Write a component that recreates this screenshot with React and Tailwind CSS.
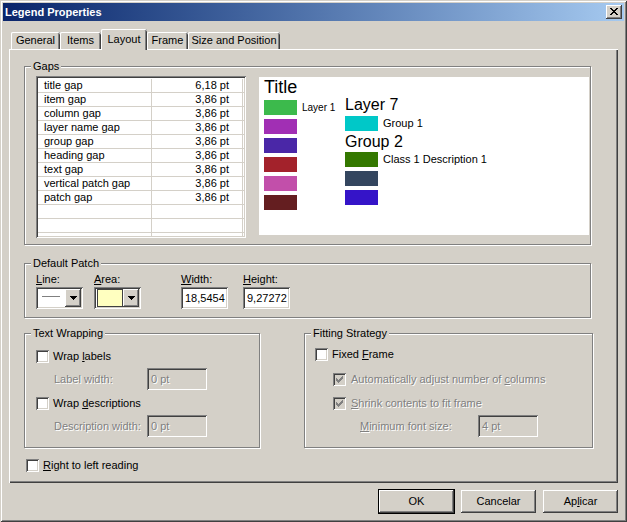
import React from "react";

const SUNKEN =
  "shadow-[inset_1px_1px_0_#808080,inset_-1px_-1px_0_#ffffff,inset_2px_2px_0_#404040,inset_-2px_-2px_0_#d4d0c8]";
const RAISED =
  "shadow-[inset_-1px_-1px_0_#404040,inset_1px_1px_0_#ffffff,inset_-2px_-2px_0_#808080,inset_2px_2px_0_#d4d0c8]";
const ETCHED = "border border-[#808080] shadow-[inset_1px_1px_0_#ffffff,1px_1px_0_#ffffff]";
const DIS = "text-[#808080] [text-shadow:1px_1px_0_#ffffff]";

function Pixels({ rows, color, className = "" }) {
  const h = rows.length;
  const w = rows[0].length;
  const rects = [];
  rows.forEach((r, y) =>
    r.split("").forEach((c, x) => {
      if (c === "X") rects.push(<rect key={x + "-" + y} x={x} y={y} width="1" height="1" fill={color} />);
    })
  );
  return (
    <svg width={w} height={h} viewBox={`0 0 ${w} ${h}`} shapeRendering="crispEdges" className={className}>
      {rects}
    </svg>
  );
}

const CHECK = ["......X", ".....XX", "X...XXX", "XX.XXX.", "XXXXX..", ".XXX...", "..X...."];
const TRI = ["XXXXXXX", ".XXXXX.", "..XXX..", "...X..."];
const CLOSE = ["XX....XX", ".XX..XX.", "..XXXX..", "...XX...", "..XXXX..", ".XX..XX.", "XX....XX"];

function Check({ checked, disabled }) {
  return (
    <span
      className={`w-[13px] h-[13px] shrink-0 flex items-center justify-center ${SUNKEN} ${
        disabled ? "bg-[#d4d0c8]" : "bg-white"
      }`}
    >
      {checked && <Pixels rows={CHECK} color={disabled ? "#808080" : "#000000"} />}
    </span>
  );
}

function U({ children }) {
  return <span className="underline underline-offset-[1px]">{children}</span>;
}

function Group({ title, className = "", children }) {
  return (
    <div className={`${ETCHED} flex flex-col shrink-0 ${className}`}>
      <div className="-mt-[7px] ml-[6px] px-[2px] w-fit bg-[#d4d0c8] leading-[13px]">{title}</div>
      {children}
    </div>
  );
}

function Tab({ label, width, selected }) {
  return (
    <div
      className={`flex justify-center rounded-t-[2px] bg-[#d4d0c8] shadow-[inset_1px_0_0_#ffffff,inset_0_1px_0_#ffffff,inset_-1px_0_0_#404040,inset_-2px_0_0_#808080] ${
        selected ? "relative z-10 h-[21px] -mb-px pt-[4px]" : "h-[17px] pt-[2px]"
      } ${width}`}
    >
      {label}
    </div>
  );
}

function Button({ children, def }) {
  return (
    <div
      className={`w-[75px] h-[23px] flex items-center justify-center bg-[#d4d0c8] ${RAISED} ${
        def ? "outline outline-1 outline-black" : ""
      }`}
    >
      {children}
    </div>
  );
}

function Dropdown({ children }) {
  return (
    <div className={`w-[47px] h-[22px] p-[2px] bg-white ${SUNKEN} flex`}>
      <div className="flex-1 flex items-center">{children}</div>
      <div className={`w-[16px] h-[18px] bg-[#d4d0c8] ${RAISED} flex items-center justify-center`}>
        <Pixels rows={TRI} color="#000000" />
      </div>
    </div>
  );
}

function Field({ value, w = "w-[47px]", disabled }) {
  return (
    <div
      className={`${w} h-[22px] ${SUNKEN} ${disabled ? "bg-[#d4d0c8]" : "bg-white"} flex items-center pl-[4px] pt-[1px]`}
    >
      <span className={disabled ? DIS : ""}>{value}</span>
    </div>
  );
}

const GAPS = [
  ["title gap", "6,18 pt"],
  ["item gap", "3,86 pt"],
  ["column gap", "3,86 pt"],
  ["layer name gap", "3,86 pt"],
  ["group gap", "3,86 pt"],
  ["heading gap", "3,86 pt"],
  ["text gap", "3,86 pt"],
  ["vertical patch gap", "3,86 pt"],
  ["patch gap", "3,86 pt"],
  ["", ""],
  ["", ""],
  ["", ""],
];

function Patch({ color }) {
  return <div className="w-[33px] h-[15px] shrink-0" style={{ backgroundColor: color }} />;
}

export default function App() {
  return (
    <div
      className={`font-['Liberation_Sans',Arial,sans-serif] text-[11px] leading-[13px] text-black w-[627px] h-[522px] bg-[#d4d0c8] p-[3px] flex flex-col shadow-[inset_1px_1px_0_#d4d0c8,inset_-1px_-1px_0_#404040,inset_2px_2px_0_#ffffff,inset_-2px_-2px_0_#808080]`}
    >
      {/* Title bar */}
      <div className="h-[18px] shrink-0 flex items-center justify-between bg-linear-to-r from-[#0a246a] to-[#a6caf0] pl-[2px] pr-[2px]">
        <span className="text-white font-bold text-[11px]">Legend Properties</span>
        <div className={`w-[16px] h-[14px] bg-[#d4d0c8] ${RAISED} flex items-center justify-center pb-[1px]`}>
          <Pixels rows={CLOSE} color="#000000" />
        </div>
      </div>

      <div className="flex flex-col px-[6px] pt-[8px]">
        {/* Tabs */}
        <div className="flex items-end pl-[2px]">
          <Tab label="General" width="w-[49px]" />
          <Tab label="Items" width="w-[41px]" />
          <Tab label="Layout" width="w-[46px]" selected />
          <Tab label="Frame" width="w-[41px]" />
          <Tab label="Size and Position" width="w-[92px]" />
        </div>

        {/* Panel */}
        <div className="h-[434px] flex flex-col pl-[15px] pt-[17px] shadow-[inset_1px_1px_0_#ffffff,inset_-1px_-1px_0_#404040,inset_-2px_-2px_0_#808080]">
          {/* Gaps */}
          <Group title="Gaps" className="w-[567px] h-[179px]">
            <div className="flex items-start mt-[3px] pl-[11px] gap-[13px]">
              <div className={`w-[210px] h-[162px] bg-white p-[2px] ${SUNKEN}`}>
                <div className="h-full overflow-hidden pt-[1px]">
                  {GAPS.map(([n, v], i) => (
                    <div key={i} className="flex h-[14px] border-b border-[#d4d0c8] leading-[13px]">
                      <div className="w-[114px] pl-[6px] border-r border-[#d4d0c8]">{n}</div>
                      <div className="w-[91px] pr-[13px] text-right border-r border-[#d4d0c8]">{v}</div>
                      <div className="flex-1" />
                    </div>
                  ))}
                </div>
              </div>
              <div className="mt-[1px] w-[330px] h-[158px] bg-white pl-[5px] pt-[1px] flex flex-col">
                <div className="text-[18px] leading-[18px]">Title</div>
                <div className="flex items-start">
                  <div className="w-[81px] shrink-0 mt-[4px] flex flex-col gap-[4px]">
                    <div className="flex items-center gap-[5px]">
                      <Patch color="#3cba4c" />
                      <span className="text-[10px] leading-[12px] whitespace-nowrap">Layer 1</span>
                    </div>
                    <Patch color="#a12fb4" />
                    <Patch color="#4a27a7" />
                    <Patch color="#a3222b" />
                    <Patch color="#c24faa" />
                    <Patch color="#641e20" />
                  </div>
                  <div className="flex flex-col">
                    <div className="text-[16px] leading-[18px]">Layer 7</div>
                    <div className="mt-[2px] flex items-center gap-[5px]">
                      <Patch color="#00c8c8" />
                      <span className="text-[11px] leading-[13px]">Group 1</span>
                    </div>
                    <div className="mt-[2px] text-[16px] leading-[18px]">Group 2</div>
                    <div className="mt-[1px] flex items-center gap-[5px]">
                      <Patch color="#347800" />
                      <span className="text-[11px] leading-[13px]">Class 1 Description 1</span>
                    </div>
                    <div className="mt-[4px]">
                      <Patch color="#34465f" />
                    </div>
                    <div className="mt-[4px]">
                      <Patch color="#3514c8" />
                    </div>
                  </div>
                </div>
              </div>
            </div>
          </Group>

          {/* Default Patch */}
          <Group title="Default Patch" className="mt-[18px] w-[567px] h-[55px]">
            <div className="flex mt-[3px] pl-[11px]">
              <div className="flex flex-col gap-[1px]">
                <span>
                  <U>L</U>ine:
                </span>
                <Dropdown>
                  <div className="ml-[4px] w-[18px] h-px bg-[#808080] -mt-[3px]" />
                </Dropdown>
              </div>
              <div className="flex flex-col gap-[1px] ml-[11px]">
                <span>
                  <U>A</U>rea:
                </span>
                <Dropdown>
                  <div className="ml-[1px] w-[26px] h-[18px] border border-[#404040] bg-[#ffffc0]" />
                </Dropdown>
              </div>
              <div className="flex flex-col gap-[1px] ml-[40px]">
                <span>
                  <U>W</U>idth:
                </span>
                <Field value="18,5454" />
              </div>
              <div className="flex flex-col gap-[1px] ml-[15px]">
                <span>
                  <U>H</U>eight:
                </span>
                <Field value="9,27272" />
              </div>
            </div>
          </Group>

          {/* Text wrapping / Fitting */}
          <div className="flex mt-[15px]">
            <Group title="Text Wrapping" className="w-[236px] h-[115px]">
              <div className="flex flex-col pl-[11px]">
                <div className="mt-[10px] flex items-center gap-[4px]">
                  <Check />
                  <span>
                    Wrap <U>l</U>abels
                  </span>
                </div>
                <div className="mt-[5px] h-[22px] flex items-center">
                  <span className={`w-[111px] pl-[18px] ${DIS}`}>Label width:</span>
                  <Field value="0 pt" w="w-[60px]" disabled />
                </div>
                <div className="mt-[7px] flex items-center gap-[4px]">
                  <Check />
                  <span>
                    Wrap <U>d</U>escriptions
                  </span>
                </div>
                <div className="mt-[5px] h-[22px] flex items-center">
                  <span className={`w-[111px] pl-[18px] ${DIS}`}>Description width:</span>
                  <Field value="0 pt" w="w-[60px]" disabled />
                </div>
              </div>
            </Group>
            <Group title="Fitting Strategy" className="ml-[44px] w-[289px] h-[115px]">
              <div className="flex flex-col pl-[10px]">
                <div className="mt-[8px] flex items-center gap-[4px]">
                  <Check />
                  <span>
                    Fixed <U>F</U>rame
                  </span>
                </div>
                <div className="mt-[12px] pl-[18px] flex items-center gap-[5px]">
                  <Check checked disabled />
                  <span className={DIS}>
                    Automatically adjust number of <U>c</U>olumns
                  </span>
                </div>
                <div className="mt-[11px] pl-[18px] flex items-center gap-[5px]">
                  <Check checked disabled />
                  <span className={DIS}>
                    <U>S</U>hrink contents to fit frame
                  </span>
                </div>
                <div className="mt-[5px] h-[22px] flex items-center">
                  <span className={`w-[163px] pl-[45px] ${DIS}`}>
                    <U>M</U>inimum font size:
                  </span>
                  <Field value="4 pt" w="w-[60px]" disabled />
                </div>
              </div>
            </Group>
          </div>

          <div className="mt-[11px] ml-[2px] flex items-center gap-[4px]">
            <Check />
            <span>
              <U>R</U>ight to left reading
            </span>
          </div>
        </div>

        {/* Buttons */}
        <div className="flex justify-end gap-[7px] mt-[7px]">
          <Button def>OK</Button>
          <Button>Cancelar</Button>
          <Button>
            Ap<U>l</U>icar
          </Button>
        </div>
      </div>
    </div>
  );
}
